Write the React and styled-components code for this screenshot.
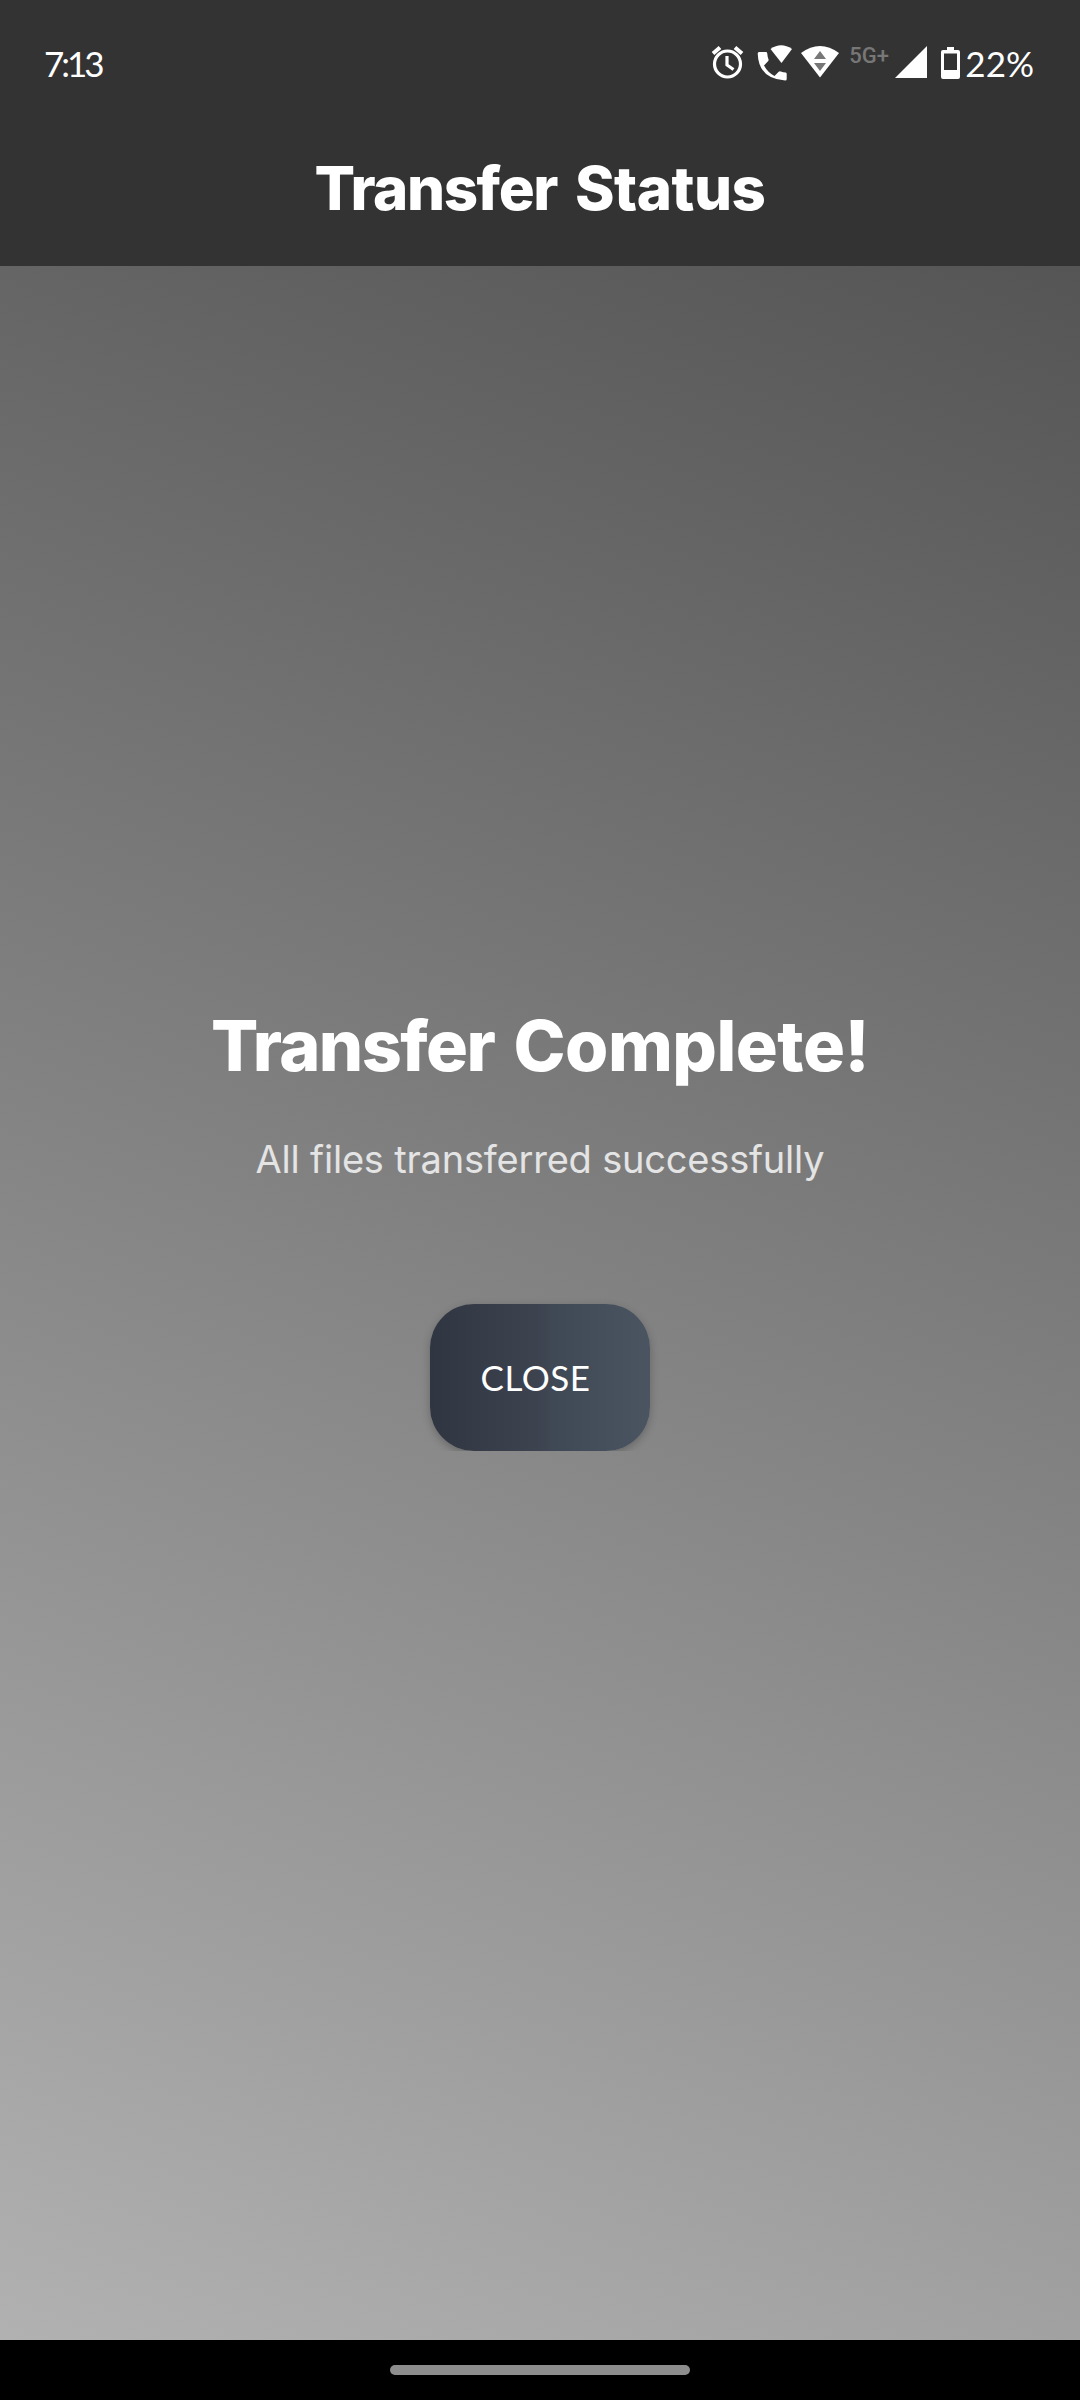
import React from "react";
import styled, { createGlobalStyle } from "styled-components";

const GlobalStyle = createGlobalStyle`
  * { box-sizing: border-box; }
  body { margin: 0; background: #000; font-family: Inter, "Liberation Sans", sans-serif; }
`;
const Screen = styled.div`
  width: 1080px;
  height: 2400px;
  display: flex;
  flex-direction: column;
  color: #fff;
`;
const Header = styled.header`
  height: 266px;
  background: #333;
  display: flex;
  flex-direction: column;
`;
const StatusBar = styled.div`
  height: 126px;
  padding: 0 46px 0 44px;
  display: flex;
  align-items: center;
  justify-content: space-between;
  font-family: Lato, sans-serif;
`;
const Clock = styled.span`
  font-size: 35px;
  line-height: 40px;
  padding-bottom: 1px;
  letter-spacing: ${(p) => p.$tracking || "0"};
`;
const Indicators = styled.div`
  display: flex;
  align-items: center;
`;
const Glyphs = styled.svg`
  display: block;
  width: 138px;
  height: 44px;
`;
const Network = styled.span`
  font: 500 22px/24px Roboto, sans-serif;
  color: #777;
  margin-top: -14px;
  margin-left: 3px;
  width: 43px;
`;
const Power = styled.svg`
  display: block;
  width: 73px;
  height: 44px;
`;
const Title = styled.h1`
  margin: 0;
  height: 124px;
  text-align: center;
  font-size: 60px;
  line-height: 124px;
  font-weight: 800;
  letter-spacing: -1.4px;
  word-spacing: 6px;
`;
const Word = styled.span`
  letter-spacing: ${(p) => p.$tracking};
`;
const Content = styled.main`
  flex: 1;
  display: flex;
  flex-direction: column;
  align-items: center;
  padding-top: 730px;
  background: linear-gradient(202deg, #555 0%, #808080 47%, #b1b1b1 100%);
`;
const Heading = styled.h2`
  margin: 0;
  font-size: 70px;
  line-height: 100px;
  font-weight: 800;
  letter-spacing: -1px;
  word-spacing: 5px;
`;
const Message = styled.p`
  margin: 33px 0 1px;
  font-size: 38px;
  line-height: 60px;
  letter-spacing: -0.2px;
  color: #e4e4e4;
`;
const ButtonArea = styled.div`
  margin-top: 104px;
  padding: 10px 10px 0;
  overflow: hidden;
`;
const CloseButton = styled.button`
  display: block;
  width: 220px;
  height: 147px;
  padding: 0 9px 1px 0;
  border: 0;
  border-radius: 44px;
  color: #fff;
  font: 400 35px/40px Lato, sans-serif;
  letter-spacing: 0.5px;
  background: linear-gradient(90deg, #2f3541 0%, #3e4350 50%, #3f4955 56%, #4b5562 100%);
  box-shadow: 0 3px 8px rgba(0, 0, 0, 0.24);
`;
const NavBar = styled.footer`
  height: 60px;
  background: #000;
  display: flex;
  align-items: center;
  justify-content: center;
`;
const NavHandle = styled.div`
  width: 300px;
  height: 10px;
  border-radius: 5px;
  background: #8d8d8d;
`;

export default function App() {
  return (
    <>
      <GlobalStyle />
      <Screen>
        <Header>
          <StatusBar>
            <Clock $tracking="-3px">7:13</Clock>
            <Indicators>
              <Glyphs viewBox="708 41 138 44" fill="none">
                <g stroke="#fff" strokeWidth="3.2">
                  <circle cx="727.5" cy="64" r="13" />
                  <path d="M713 53.5l7-6M735 47.5l7 6" strokeWidth="4" />
                  <path d="M727 56v9l6.5 4.5" />
                </g>
                <path fill="#fff" d="M759 52h7q1 0 1.2 1.300.3 3.500 1.300 6 .3 1.200-.5 2l-4 4.200q3.800 7 10.500 10.500l4.200-4.200q.9-.8 2-.4 2.800.9 5 1.100 1 .2 1 1.500v5q0 1.500-1.500 1.500-26.700-1.500-27.500-27Q757.700 52 759 52z" />
                <path fill="#fff" d="M770.500 49q10.500-7.500 21.500 0L781.500 63z" />
                <path fill="#fff" d="M801 53q19-14 38 0L820 77.500z" />
                <path fill="#777" d="M814 59h12l-6-8zM814 63h12l-6 8z" />
              </Glyphs>
              <Network>5G+</Network>
              <Power viewBox="892 41 73 44">
                <path fill="#fff" d="M895 78L927 46V78z" />
                <path fill="#fff" fillRule="evenodd" d="M947 47h7v3h4q2 0 2 2v25q0 2-2 2h-15q-2 0-2-2V52q0-2 2-2h4zM944 53.500V70h13V53.500z" />
              </Power>
              <Clock>22%</Clock>
            </Indicators>
          </StatusBar>
          <Title>
            Transfer <Word $tracking="-0.5px">Status</Word>
          </Title>
        </Header>
        <Content>
          <Heading>
            <Word $tracking="-1.6px">Transfer</Word> <Word $tracking="-0.5px">Complete!</Word>
          </Heading>
          <Message>All files transferred successfully</Message>
          <ButtonArea>
            <CloseButton>CLOSE</CloseButton>
          </ButtonArea>
        </Content>
        <NavBar>
          <NavHandle />
        </NavBar>
      </Screen>
    </>
  );
}
